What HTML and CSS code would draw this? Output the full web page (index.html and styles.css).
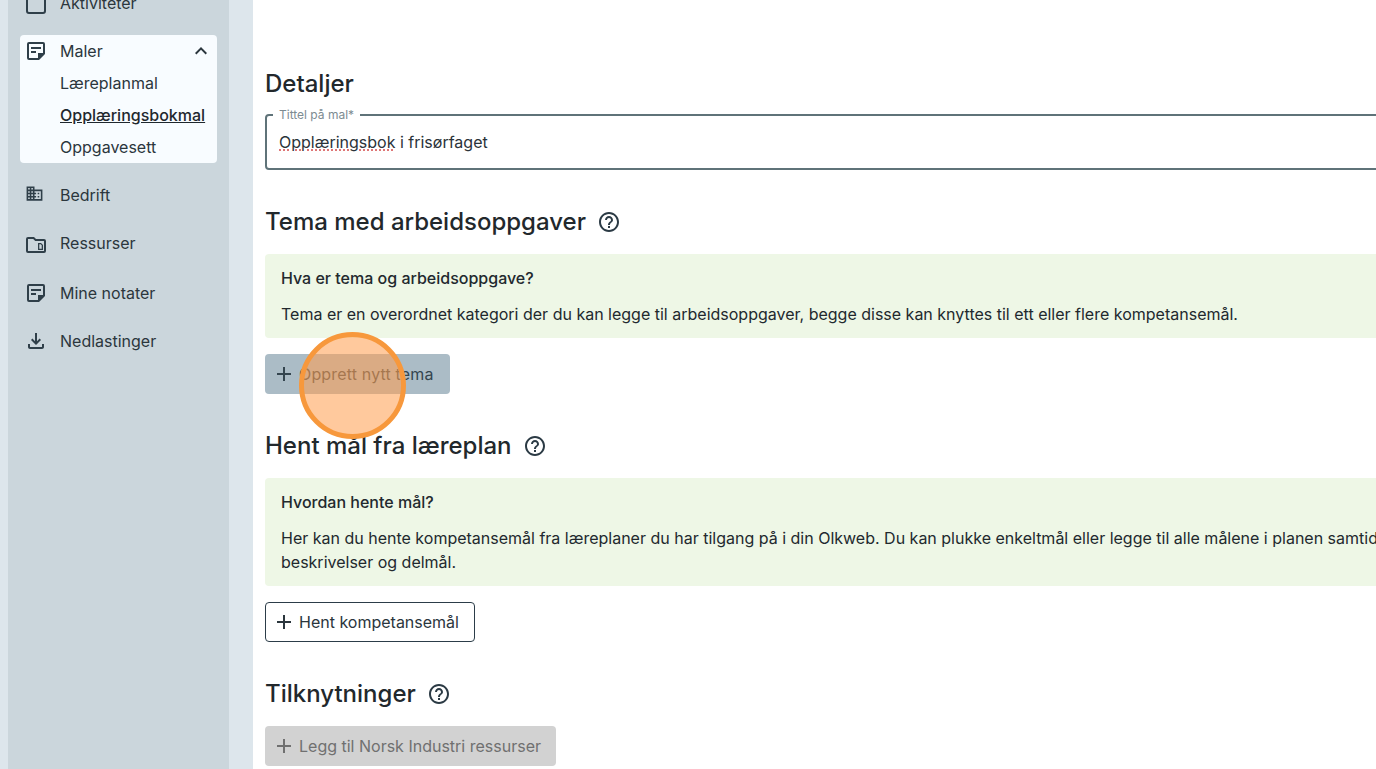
FILE: index.html
```html
<!DOCTYPE html>
<html lang="no">

<head>
    <title>Opplæringsbokmal</title>
    <meta name="viewport" content="width=device-width, initial-scale=1">
    <link rel="stylesheet" href="styles.css">
</head>

<body>
    <svg class="defs" width="0" height="0" aria-hidden="true">
        <symbol id="note" viewBox="0 0 24 24">
            <path fill="currentColor" d="M19 5v9h-5v5H5V5h14zm0-2H5a2 2 0 0 0-2 2v14a2 2 0 0 0 2 2h10l6-6V5a2 2 0 0 0-2-2zm-7 11H7v-2h5v2zm5-4H7V8h10v2z"/>
        </symbol>
        <symbol id="help" viewBox="0 0 24 24">
            <path fill="currentColor" d="M11 18h2v-2h-2v2zm1-16C6.480 2 2 6.480 2 12s4.480 10 10 10 10-4.480 10-10S17.520 2 12 2zm0 18c-4.410 0-8-3.590-8-8s3.590-8 8-8 8 3.590 8 8-3.590 8-8 8zm0-14c-2.210 0-4 1.790-4 4h2c0-1.100.9-2 2-2s2 .9 2 2c0 2-3 1.750-3 5h2c0-2.250 3-2.500 3-5 0-2.210-1.790-4-4-4z"/>
        </symbol>
        <symbol id="plus" viewBox="0 0 24 24">
            <path fill="currentColor" d="M19 13h-6v6h-2v-6H5v-2h6V5h2v6h6v2z"/>
        </symbol>
    </svg>

    <div class="page">
        <aside class="sidebar">
            <ul class="nav">
                <li class="nav-item nav-first">
                    <svg class="nav-icon" viewBox="0 0 24 24"><rect x="3" y="3" width="18" height="19" rx="2" fill="none" stroke="currentColor" stroke-width="2"/></svg>
                    <span>Aktiviteter</span>
                </li>
                <li class="nav-group">
                    <div class="nav-item nav-head">
                        <svg class="nav-icon"><use href="#note"/></svg>
                        <span>Maler</span>
                        <svg class="chevron" viewBox="0 0 24 24"><path fill="currentColor" d="M12 8l-6 6 1.410 1.410L12 10.830l4.590 4.580L18 14z"/></svg>
                    </div>
                    <a class="sub-item">Læreplanmal</a>
                    <a class="sub-item current">Opplæringsbokmal</a>
                    <a class="sub-item">Oppgavesett</a>
                </li>
                <li class="nav-item">
                    <svg class="nav-icon icon-small" viewBox="0 0 24 24"><path fill="currentColor" d="M12 7V3H2v18h20V7H12zM6 19H4v-2h2v2zm0-4H4v-2h2v2zm0-4H4V9h2v2zm0-4H4V5h2v2zm4 12H8v-2h2v2zm0-4H8v-2h2v2zm0-4H8V9h2v2zm0-4H8V5h2v2zm10 12h-8v-2h2v-2h-2v-2h2v-2h-2V9h8v10zm-2-8h-2v2h2v-2zm0 4h-2v2h2v-2z"/></svg>
                    <span>Bedrift</span>
                </li>
                <li class="nav-item nav-gap">
                    <svg class="nav-icon icon-down" viewBox="0 0 24 24"><path fill="currentColor" d="M4 4h6l2 2h8a2 2 0 0 1 2 2v10a2 2 0 0 1-2 2H4a2 2 0 0 1-2-2V6a2 2 0 0 1 2-2zm0 2v12h16V8h-8.800l-2-2H4zm10 4h3l2 2v5h-5v-7zm1.300 1.300v4.400h2.400v-3.400l-1-1h-1.400z"/></svg>
                    <span>Ressurser</span>
                </li>
                <li class="nav-item">
                    <svg class="nav-icon"><use href="#note"/></svg>
                    <span>Mine notater</span>
                </li>
                <li class="nav-item">
                    <svg class="nav-icon" viewBox="0 0 24 24"><path fill="currentColor" d="M18 15v3H6v-3H4v3c0 1.100.9 2 2 2h12c1.100 0 2-.9 2-2v-3h-2zm-1-4l-1.410-1.410L13 12.170V4h-2v8.170L8.410 9.590 7 11l5 5 5-5z"/></svg>
                    <span>Nedlastinger</span>
                </li>
            </ul>
        </aside>

        <main class="main">
            <h2 class="heading first">Detaljer</h2>
            <fieldset class="field">
                <legend>Tittel på mal*</legend>
                <div class="field-value"><span class="misspelled">Opplæringsbok</span> i frisørfaget</div>
            </fieldset>

            <h2 class="heading">Tema med arbeidsoppgaver <svg class="help"><use href="#help"/></svg></h2>
            <div class="info">
                <h4>Hva er tema og arbeidsoppgave?</h4>
                <p>Tema er en overordnet kategori der du kan legge til arbeidsoppgaver, begge disse kan knyttes til ett eller flere kompetansemål.</p>
            </div>
            <button class="btn btn-hover"><svg><use href="#plus"/></svg>Opprett nytt tema</button>

            <h2 class="heading">Hent mål fra læreplan <svg class="help"><use href="#help"/></svg></h2>
            <div class="info">
                <h4>Hvordan hente mål?</h4>
                <p>Her kan du hente kompetansemål fra læreplaner du har tilgang på i din Olkweb. Du kan plukke enkeltmål eller legge til alle målene i planen samtidig, med beskrivelser og delmål.</p>
            </div>
            <button class="btn btn-outline"><svg><use href="#plus"/></svg>Hent kompetansemål</button>

            <h2 class="heading">Tilknytninger <svg class="help"><use href="#help"/></svg></h2>
            <button class="btn btn-disabled"><svg><use href="#plus"/></svg>Legg til Norsk Industri ressurser</button>
        </main>
    </div>

    <div class="click-marker"></div>
</body>

</html>
```

FILE: styles.css
```css
* {
    box-sizing: border-box;
}

html,
body {
    height: 100%;
}

body {
    margin: 0;
    overflow: hidden;
    background-color: #dde6ec;
    font-family: Inter, "Liberation Sans", sans-serif;
    color: #22292e;
}

.defs {
    position: absolute;
}

.page {
    display: flex;
    height: 769px;
    padding-left: 8px;
}

/* Sidebar */
.sidebar {
    flex: 0 0 221px;
    background-color: #cbd6dc;
    padding: 0 12px;
    overflow: hidden;
}

.nav {
    list-style: none;
    margin: -13px 0 0;
    padding: 0;
}

.nav-item {
    display: flex;
    align-items: center;
    height: 32px;
    font-size: 16px;
    color: #2b363d;
    margin-bottom: 16px;
}

.nav-gap {
    margin-bottom: 18px;
}

.nav-icon {
    flex: none;
    width: 24px;
    height: 24px;
    margin: 0 12px 0 4px;
    color: #2f3f49;
}

.icon-small {
    width: 19px;
    height: 19px;
    margin: 0 16.500px 0 4.500px;
    transform: translateY(-2px);
}

.icon-down {
    transform: translateY(2px);
}

.nav-group {
    background-color: #f8fcff;
    border-radius: 4px;
    height: 128px;
    margin-bottom: 16px;
}

.nav-head {
    margin-bottom: 0;
}

.chevron {
    width: 24px;
    height: 24px;
    margin-left: auto;
    margin-right: 4px;
}

.sub-item {
    display: block;
    height: 32px;
    line-height: 32px;
    padding-left: 40px;
    font-size: 16px;
    color: #2b363d;
}

.current {
    text-decoration: underline;
    font-weight: 500;
    color: #1f282e;
}

/* Main column */
.main {
    flex: none;
    width: 1250px;
    margin-left: 24px;
    padding: 0 12px;
    background-color: #fff;
}

.heading {
    display: flex;
    align-items: center;
    margin: 0;
    padding-top: 36px;
    height: 68px;
    font-size: 24px;
    font-weight: 500;
    line-height: 32px;
    color: #22282c;
}

.heading.first {
    padding-top: 68px;
    height: 100px;
}

.help {
    width: 24px;
    height: 24px;
    margin-left: 11px;
    color: #2b3a44;
}

.field {
    height: 62px;
    margin: 8px 0 0;
    padding: 0 12px;
    border: 2px solid #5f7379;
    border-radius: 4px;
}

.field legend {
    padding: 0 6px;
    margin-left: -6px;
    font-size: 12px;
    line-height: 13px;
    color: #7d8b92;
}

.field-value {
    font-size: 16px;
    line-height: 24px;
    margin-top: 9px;
    color: #2b3339;
}

.misspelled {
    text-decoration: underline dotted #d4494a;
    text-underline-offset: 2px;
}

.info {
    margin-top: 16px;
    padding: 12px 16px;
    background-color: #eef7e6;
    border-radius: 4px;
    font-size: 16px;
    line-height: 24px;
    color: #22292e;
}

.info h4 {
    margin: 0;
    font-size: 16px;
    font-weight: 500;
    line-height: 24px;
}

.info p {
    margin: 12px 0 0;
}

.btn {
    display: flex;
    align-items: center;
    height: 40px;
    margin-top: 16px;
    padding: 0 16px 0 7px;
    border: 0;
    border-radius: 4px;
    font-family: inherit;
    font-size: 16px;
}

.btn svg {
    width: 24px;
    height: 24px;
    margin-right: 3px;
    flex: none;
}

.btn-hover {
    background-color: #abbcc6;
    color: #34454f;
    letter-spacing: 0.01em;
}

.btn-outline {
    background-color: #fff;
    border: 1px solid #2c3d49;
    padding: 0 15px 0 6px;
    color: #2b363d;
}

.btn-disabled {
    background-color: #d2d2d2;
    color: #707070;
    padding-right: 15px;
}

.click-marker {
    position: absolute;
    left: 299px;
    top: 332px;
    width: 107px;
    height: 107px;
    border-radius: 50%;
    border: 5px solid #f7983c;
    background-color: rgba(255, 158, 80, 0.56);
}
```
